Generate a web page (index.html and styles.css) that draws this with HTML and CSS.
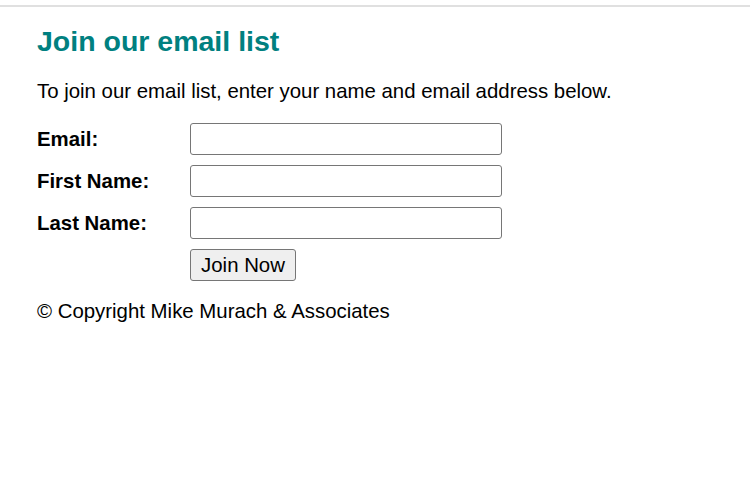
FILE: index.html
```html
<!DOCTYPE html>
<html>
<head>
<meta charset="utf-8">
<link rel="stylesheet" href="styles.css">
</head>
<body>
<div class="rule"></div>
<main class="page">
  <h1>Join our email list</h1>
  <p class="intro">To join our email list, enter your name and email address below.</p>
  <form class="form">
    <div class="row"><label>Email:</label><input type="email"></div>
    <div class="row"><label>First Name:</label><input type="text"></div>
    <div class="row"><label>Last Name:</label><input type="text"></div>
    <div class="row"><label></label><button type="button">Join Now</button></div>
  </form>
  <p class="copy">© Copyright Mike Murach &amp; Associates</p>
</main>
</body>
</html>
```

FILE: styles.css
```css
html, body {
  margin: 0;
  padding: 0;
  background: #fff;
}
body {
  font-family: "Liberation Sans", Arial, sans-serif;
  font-size: 20.4px;
  color: #000;
}
.rule {
  margin-top: 5px;
  height: 2px;
  background: #e0e0e0;
}
.page {
  padding-left: 37px;
}
h1 {
  margin: 18px 0 0;
  font-size: 28.5px;
  line-height: 33px;
  font-weight: bold;
  color: #008080;
}
.intro {
  margin: 22px 0 0;
  line-height: 23px;
}
.form {
  margin-top: 20px;
  display: flex;
  flex-direction: column;
  gap: 10px;
}
.row {
  display: flex;
  align-items: center;
}
label {
  width: 153px;
  font-weight: bold;
  line-height: 23px;
}
input {
  box-sizing: border-box;
  width: 312px;
  height: 32px;
  border: 1px solid #767676;
  border-radius: 3px;
  margin: 0;
  padding: 2px 4px;
  font-size: 20px;
  font-family: inherit;
  background: #fff;
}
button {
  box-sizing: border-box;
  height: 32px;
  width: 106px;
  padding: 0;
  margin: 0;
  border: 1px solid #767676;
  border-radius: 3px;
  background: #efefef;
  font-family: inherit;
  font-size: 20.4px;
  color: #000;
}
.copy {
  margin: 19px 0 0;
  line-height: 23px;
}
```
